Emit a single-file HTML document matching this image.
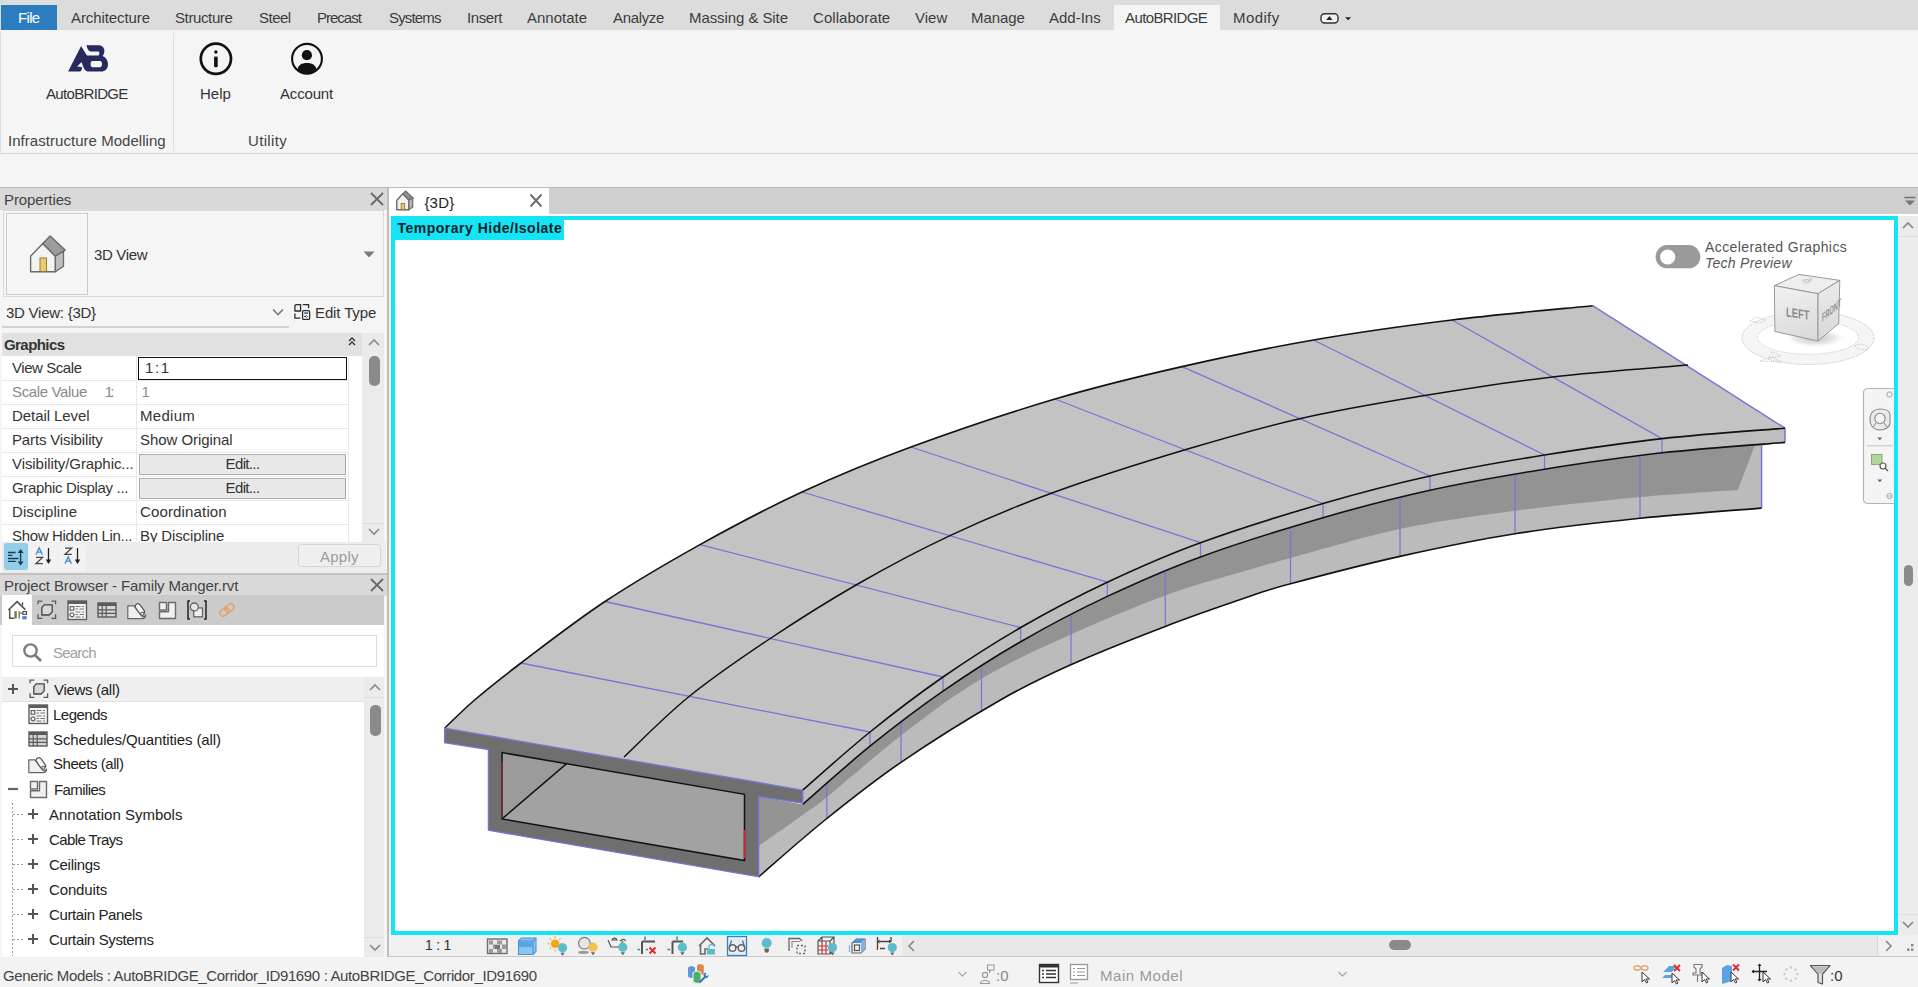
<!DOCTYPE html>
<html><head><meta charset="utf-8"><title>Revit</title>
<style>
html,body{margin:0;padding:0;width:1918px;height:987px;overflow:hidden;background:#f5f5f5;}
body{position:relative;font-family:"Liberation Sans", sans-serif;}
.t{position:absolute;white-space:nowrap;}
.r{position:absolute;}
svg{position:absolute;overflow:visible;}
</style></head><body>
<div class="r" style="left:0px;top:0px;width:1918px;height:30px;background:#dcdcdc;"></div>
<div class="r" style="left:1px;top:5px;width:56px;height:25px;background:#2b7dc0;"></div>
<div class="t" style="left:18.0px;top:10.3px;font-size:15px;line-height:15px;color:#ffffff;letter-spacing:-0.67px;">File</div>
<div class="r" style="left:1114px;top:5px;width:106px;height:25px;background:#f5f5f5;"></div>
<div class="t" style="left:71.0px;top:10.3px;font-size:15px;line-height:15px;color:#3c3c3c;letter-spacing:-0.09px;">Architecture</div>
<div class="t" style="left:175.0px;top:10.3px;font-size:15px;line-height:15px;color:#3c3c3c;letter-spacing:-0.38px;">Structure</div>
<div class="t" style="left:259.0px;top:10.3px;font-size:15px;line-height:15px;color:#3c3c3c;letter-spacing:-0.50px;">Steel</div>
<div class="t" style="left:317.0px;top:10.3px;font-size:15px;line-height:15px;color:#3c3c3c;letter-spacing:-1.00px;">Precast</div>
<div class="t" style="left:389.0px;top:10.3px;font-size:15px;line-height:15px;color:#3c3c3c;letter-spacing:-0.83px;">Systems</div>
<div class="t" style="left:467.0px;top:10.3px;font-size:15px;line-height:15px;color:#3c3c3c;letter-spacing:-0.40px;">Insert</div>
<div class="t" style="left:527.0px;top:10.3px;font-size:15px;line-height:15px;color:#3c3c3c;">Annotate</div>
<div class="t" style="left:613.0px;top:10.3px;font-size:15px;line-height:15px;color:#3c3c3c;letter-spacing:-0.33px;">Analyze</div>
<div class="t" style="left:689.0px;top:10.3px;font-size:15px;line-height:15px;color:#3c3c3c;letter-spacing:-0.08px;">Massing &amp; Site</div>
<div class="t" style="left:813.0px;top:10.3px;font-size:15px;line-height:15px;color:#3c3c3c;letter-spacing:0.05px;">Collaborate</div>
<div class="t" style="left:915.0px;top:10.3px;font-size:15px;line-height:15px;color:#3c3c3c;">View</div>
<div class="t" style="left:971.0px;top:10.3px;font-size:15px;line-height:15px;color:#3c3c3c;letter-spacing:-0.08px;">Manage</div>
<div class="t" style="left:1049.0px;top:10.3px;font-size:15px;line-height:15px;color:#3c3c3c;">Add-Ins</div>
<div class="t" style="left:1125.0px;top:10.3px;font-size:15px;line-height:15px;color:#3c3c3c;letter-spacing:-0.61px;">AutoBRIDGE</div>
<div class="t" style="left:1233.0px;top:10.3px;font-size:15px;line-height:15px;color:#3c3c3c;letter-spacing:0.40px;">Modify</div>
<svg style="left:0;top:0" width="1400" height="30" viewBox="0 0 1400 30"><rect x="1321" y="13.8" width="17" height="9.2" rx="3.5" fill="#f0f2f5" stroke="#333" stroke-width="1.4"/><path d="M1326.2 19.9 L1329.4 16.1 L1332.5 19.9 Z" fill="#222"/><path d="M1345.1 17.25 H1351.1 L1348.1 20.3 Z" fill="#222"/></svg><div class="r" style="left:0px;top:30px;width:1918px;height:123px;background:#f5f5f5;"></div>
<div class="r" style="left:0px;top:153px;width:1918px;height:1px;background:#d3d3d3;"></div>
<div class="r" style="left:173px;top:33px;width:1px;height:118px;background:#dedede;"></div>
<div class="r" style="left:0px;top:32px;width:1px;height:121px;background:#dedede;"></div>
<div class="t" style="left:46.0px;top:86.3px;font-size:15px;line-height:15px;color:#333333;letter-spacing:-0.67px;">AutoBRIDGE</div>
<div class="t" style="left:200.0px;top:86.3px;font-size:15px;line-height:15px;color:#333333;">Help</div>
<div class="t" style="left:280.0px;top:86.3px;font-size:15px;line-height:15px;color:#333333;letter-spacing:-0.17px;">Account</div>
<div class="t" style="left:8.0px;top:133.3px;font-size:15px;line-height:15px;color:#444444;letter-spacing:0.04px;">Infrastructure Modelling</div>
<div class="t" style="left:248.0px;top:133.3px;font-size:15px;line-height:15px;color:#444444;letter-spacing:0.33px;">Utility</div>
<svg style="left:0px;top:0px" width="120" height="80" viewBox="0 0 120 80"><path fill="#262b5c" fill-rule="evenodd" d="M68.1 71.6 L81.1 46.1 L86.9 55.4 L98.3 55.4 C99.6 55.4 99.9 51.4 98.3 51.4 L90.6 51.4 C88.5 51.4 87.2 48.5 86.4 45.3 L98.5 45.3 C102.3 45.3 104.4 47.8 104.4 50.8 C104.4 53 103.6 54.8 102.6 56.1 C106 57.6 108 60.4 108 64.2 C108 68.6 105.2 71.6 101 71.6 L88.6 71.6 C85.5 71.6 84.2 69 83.1 66.6 L81.5 62 L77.2 66.4 L81.4 67 C82.6 67.3 82.1 71.6 79.2 71.6 Z M92.3 61.1 L100.3 61.1 C102.6 61.1 102.6 67.2 100.3 67.2 L92.3 67.2 C90 67.2 90 61.1 92.3 61.1 Z"/></svg><svg style="left:0px;top:0px" width="340" height="80" viewBox="0 0 340 80"><circle cx="215.9" cy="58.8" r="15.1" fill="none" stroke="#111" stroke-width="2.7"/><circle cx="215.9" cy="52" r="1.7" fill="#111"/><rect x="214.1" y="56.6" width="3.6" height="10.6" rx="1.2" fill="#111"/></svg><svg style="left:0px;top:0px" width="340" height="80" viewBox="0 0 340 80"><circle cx="307" cy="58.8" r="14.9" fill="none" stroke="#111" stroke-width="2.1"/><circle cx="306.9" cy="55.2" r="5.1" fill="#111"/><path d="M297.3 69.5 C298.5 65 301.5 63 306.9 63 C312.3 63 315.3 65 316.7 69.5 C314 72.5 310.6 73.8 306.9 73.8 C303.2 73.8 299.8 72.5 297.3 69.5 Z" fill="#111"/></svg><div class="r" style="left:0px;top:187px;width:1918px;height:1px;background:#bcbcbc;"></div>
<div class="r" style="left:0px;top:188px;width:1918px;height:799px;background:#f0f0f0;"></div>
<div class="r" style="left:0px;top:188px;width:387px;height:387px;background:#f5f5f5;"></div>
<div class="r" style="left:0px;top:188px;width:387px;height:22px;background:#d9d9d9;"></div>
<div class="t" style="left:4.0px;top:192.3px;font-size:15px;line-height:15px;color:#444444;letter-spacing:-0.11px;">Properties</div>
<svg style="left:370px;top:192px" width="14" height="14" viewBox="0 0 14 14"><path d="M1 1L13 13M13 1L1 13" stroke="#6a6a6a" stroke-width="1.8"/></svg><div class="r" style="left:3px;top:210px;width:381px;height:87px;border:1px solid #dadada;box-sizing:border-box;"></div>
<div class="r" style="left:6px;top:213px;width:82px;height:82px;background:#f5f5f5;border:1px solid #cdcdcd;box-sizing:border-box;"></div>
<svg style="left:0px;top:0px" width="100" height="300" viewBox="0 0 100 300"><path d="M30.6 256.2 L42.8 243.4 L55.4 256.2 L55.4 271.8 L30.6 271.8 Z" fill="#f3f3f3" stroke="#6a6a6a" stroke-width="1.4" stroke-linejoin="round"/><path d="M42.8 243.4 L50.1 236.1 L65.1 250.1 L55.4 256.2 Z" fill="#9c9c9c" stroke="#6a6a6a" stroke-width="1.4" stroke-linejoin="round"/><path d="M55.4 256.2 L63.5 251.2 L63.5 266.2 L55.4 271.8 Z" fill="#bdbdbd" stroke="#6a6a6a" stroke-width="1.3" stroke-linejoin="round"/><rect x="40" y="258" width="6.4" height="13.6" fill="#e8cf6a" stroke="#8a6d2a" stroke-width="0.9"/></svg><div class="t" style="left:94.0px;top:247.3px;font-size:15px;line-height:15px;color:#333333;letter-spacing:-0.33px;">3D View</div>
<svg style="left:363px;top:251px" width="12" height="7" viewBox="0 0 12 7"><path d="M0.5 0.5H11.5L6 6.5Z" fill="#7a7a7a"/></svg><div class="t" style="left:6.0px;top:305.3px;font-size:15px;line-height:15px;color:#333333;letter-spacing:-0.25px;">3D View: {3D}</div>
<svg style="left:272px;top:308px" width="12" height="8" viewBox="0 0 12 8"><path d="M1 1.5L6 6.5L11 1.5" fill="none" stroke="#7a7a7a" stroke-width="1.6"/></svg><div class="r" style="left:2px;top:326px;width:287px;height:2px;background:#d3d3d3;"></div>
<svg style="left:0px;top:280px" width="330" height="50" viewBox="0 0 330 50"><g transform="translate(0 -280)" fill="none" stroke="#2a2a2a" stroke-width="1.3" stroke-linejoin="round"><path d="M296 304.6 H300.6 V311 H294.9 V305.8 Z" fill="#f0f0f0"/><path d="M302.8 304.6 H308.6 V308.3"/><path d="M294.9 313.5 V318.2 H300.3"/><rect x="302.6" y="310.6" width="7" height="8.8" rx="1.2" fill="#fff"/></g><g transform="translate(0 -280)"><rect x="304.2" y="312.3" width="3.9" height="1.6" fill="#2a5fa8"/><path d="M304.2 316.4 H305.6" stroke="#2a2a2a" stroke-width="1.1"/><path d="M306.5 315.3 L307.6 316.4 L306.5 317.5 L305.4 316.4 Z" fill="none" stroke="#2a2a2a" stroke-width="0.8"/></g></svg><div class="t" style="left:315.0px;top:305.3px;font-size:15px;line-height:15px;color:#333333;letter-spacing:-0.12px;">Edit Type</div>
<div class="r" style="left:2px;top:333px;width:360px;height:23px;background:#e1e1e1;"></div>
<div class="r" style="left:362px;top:333px;width:22px;height:23px;background:#eaeaea;"></div>
<div class="t" style="left:4.0px;top:337.3px;font-size:15px;line-height:15px;color:#333333;letter-spacing:-0.57px;font-weight:bold;">Graphics</div>
<div class="r" style="left:2px;top:356px;width:360px;height:186px;background:#ffffff;"></div>
<div class="r" style="left:138px;top:357px;width:209px;height:23px;background:#ffffff;border:1.6px solid #111;box-sizing:border-box;"></div>
<div class="r" style="left:2px;top:380px;width:346px;height:1px;background:#e9e9e9;"></div>
<div class="r" style="left:2px;top:404px;width:346px;height:1px;background:#e9e9e9;"></div>
<div class="r" style="left:2px;top:428px;width:346px;height:1px;background:#e9e9e9;"></div>
<div class="r" style="left:2px;top:452px;width:346px;height:1px;background:#e9e9e9;"></div>
<div class="r" style="left:2px;top:476px;width:346px;height:1px;background:#e9e9e9;"></div>
<div class="r" style="left:2px;top:500px;width:346px;height:1px;background:#e9e9e9;"></div>
<div class="r" style="left:2px;top:524px;width:346px;height:1px;background:#e9e9e9;"></div>
<div class="r" style="left:136px;top:356px;width:1px;height:186px;background:#e9e9e9;"></div>
<div class="r" style="left:348px;top:356px;width:1px;height:186px;background:#e9e9e9;"></div>
<div class="r" style="left:138px;top:357px;width:209px;height:23px;background:#ffffff;border:1.6px solid #111;box-sizing:border-box;"></div>
<div class="r" style="left:139px;top:454px;width:207px;height:21px;background:#e8e8e8;border:1px solid #adadad;box-sizing:border-box;"></div>
<div class="r" style="left:139px;top:478px;width:207px;height:21px;background:#e8e8e8;border:1px solid #adadad;box-sizing:border-box;"></div>
<div class="t" style="left:12.0px;top:360.3px;font-size:15px;line-height:15px;color:#333333;letter-spacing:-0.44px;">View Scale</div>
<div class="t" style="left:145.0px;top:360.3px;font-size:15px;line-height:15px;color:#333333;letter-spacing:-1.25px;">1 : 1</div>
<div class="t" style="left:12.0px;top:384.3px;font-size:15px;line-height:15px;color:#8a8a8a;letter-spacing:-0.36px;">Scale Value</div>
<div class="t" style="left:104.8px;top:384.3px;font-size:15px;line-height:15px;color:#8a8a8a;letter-spacing:-3.00px;">1:</div>
<div class="t" style="left:141.6px;top:384.3px;font-size:15px;line-height:15px;color:#8a8a8a;">1</div>
<div class="t" style="left:12.0px;top:408.3px;font-size:15px;line-height:15px;color:#333333;letter-spacing:-0.07px;">Detail Level</div>
<div class="t" style="left:140.0px;top:408.3px;font-size:15px;line-height:15px;color:#333333;letter-spacing:0.28px;">Medium</div>
<div class="t" style="left:12.0px;top:432.3px;font-size:15px;line-height:15px;color:#333333;letter-spacing:-0.15px;">Parts Visibility</div>
<div class="t" style="left:140.0px;top:432.3px;font-size:15px;line-height:15px;color:#333333;letter-spacing:-0.06px;">Show Original</div>
<div class="t" style="left:12.0px;top:456.3px;font-size:15px;line-height:15px;color:#333333;letter-spacing:-0.07px;">Visibility/Graphic...</div>
<div class="t" style="left:12.0px;top:480.3px;font-size:15px;line-height:15px;color:#333333;letter-spacing:-0.34px;">Graphic Display ...</div>
<div class="t" style="left:12.0px;top:504.3px;font-size:15px;line-height:15px;color:#333333;letter-spacing:0.10px;">Discipline</div>
<div class="t" style="left:140.0px;top:504.3px;font-size:15px;line-height:15px;color:#333333;letter-spacing:0.15px;">Coordination</div>
<div class="t" style="left:12.0px;top:528.3px;font-size:15px;line-height:15px;color:#333333;letter-spacing:-0.32px;">Show Hidden Lin...</div>
<div class="t" style="left:140.0px;top:528.3px;font-size:15px;line-height:15px;color:#333333;letter-spacing:-0.12px;">By Discipline</div>
<div class="t" style="left:225.6px;top:456.3px;font-size:15px;line-height:15px;color:#333333;letter-spacing:-0.65px;">Edit...</div>
<div class="t" style="left:225.6px;top:480.3px;font-size:15px;line-height:15px;color:#333333;letter-spacing:-0.65px;">Edit...</div>
<div class="r" style="left:362px;top:356px;width:22px;height:186px;background:#ebebeb;"></div>
<svg style="left:367px;top:337px" width="14" height="10" viewBox="0 0 14 10"><path d="M2 8L7 3L12 8" fill="none" stroke="#8a8a8a" stroke-width="1.6"/></svg><svg style="left:347px;top:336px" width="10" height="10" viewBox="0 0 10 10"><path d="M2 5L5 2L8 5M2 9L5 6L8 9" fill="none" stroke="#333" stroke-width="1.3"/></svg><div class="r" style="left:369px;top:356px;width:11px;height:30px;background:#8a8a8a;border-radius:5px;"></div>
<div class="r" style="left:363px;top:523px;width:20px;height:1px;background:#dcdcdc;"></div>
<svg style="left:367px;top:527px" width="14" height="10" viewBox="0 0 14 10"><path d="M2 2L7 7L12 2" fill="none" stroke="#8a8a8a" stroke-width="1.6"/></svg><div class="r" style="left:2px;top:542px;width:384px;height:31px;background:#ececec;"></div>
<div class="r" style="left:29px;top:543px;width:28px;height:28px;background:#f2f2f2;"></div>
<div class="r" style="left:58px;top:543px;width:28px;height:28px;background:#f2f2f2;"></div>
<div class="r" style="left:4px;top:543px;width:24px;height:27px;background:#92cdec;border-radius:3px;"></div>
<svg style="left:0px;top:0px" width="90" height="575" viewBox="0 0 90 575"><path d="M8 552.5H15.6 M8 555.4H12.5 M8 558.5H18.5 M8 561.4H15.6" stroke="#1e3a4c" stroke-width="1.3"/><path d="M20.6 551 V563" stroke="#1e3a4c" stroke-width="1.4"/><path d="M17.6 553 L20.6 549 L23.6 553 Z M17.6 561.5 L20.6 565.5 L23.6 561.5 Z" fill="#1e3a4c"/><path d="M36 554.6 L39.2 547.8 L42.4 554.6 M37.2 552.2 H41.2" fill="none" stroke="#3c8fd6" stroke-width="1.3"/><path d="M36 557.4 H42.6 L36 563.6 H42.8" fill="none" stroke="#444" stroke-width="1.3"/><path d="M48.5 548 V563" stroke="#222" stroke-width="1.3"/><path d="M45.8 559.5 L48.5 564 L51.2 559.5 Z" fill="#222"/><path d="M65 548.2 H71.6 L65 554.4 H71.8" fill="none" stroke="#444" stroke-width="1.3"/><path d="M65 563.6 L68.2 556.8 L71.4 563.6 M66.2 561.2 H70.2" fill="none" stroke="#3c8fd6" stroke-width="1.3"/><path d="M77.5 548 V563" stroke="#222" stroke-width="1.3"/><path d="M74.8 559.5 L77.5 564 L80.2 559.5 Z" fill="#222"/></svg><div class="r" style="left:298px;top:544px;width:83px;height:23px;background:#efefef;border:1px solid #d6d6d6;box-sizing:border-box;border-radius:3px;"></div>
<div class="t" style="left:320.0px;top:549.3px;font-size:15px;line-height:15px;color:#9a9a9a;letter-spacing:0.25px;">Apply</div>
<div class="r" style="left:0px;top:573px;width:387px;height:2px;background:#c2c2c2;"></div>
<div class="r" style="left:0px;top:575px;width:387px;height:382px;background:#f5f5f5;"></div>
<div class="r" style="left:0px;top:575px;width:387px;height:21px;background:#d9d9d9;"></div>
<div class="t" style="left:4.0px;top:578.3px;font-size:15px;line-height:15px;color:#444444;letter-spacing:-0.12px;">Project Browser - Family Manger.rvt</div>
<svg style="left:370px;top:578px" width="14" height="14" viewBox="0 0 14 14"><path d="M1 1L13 13M13 1L1 13" stroke="#6a6a6a" stroke-width="1.8"/></svg><div class="r" style="left:0px;top:595px;width:384px;height:30px;background:#cbcbcb;"></div>
<div class="r" style="left:2px;top:595px;width:30px;height:30px;background:#ffffff;"></div>
<svg style="left:0px;top:590px" width="40" height="40" viewBox="0 0 40 40"><g transform="translate(0 -590)"><path d="M8.4 610 L17.1 601.6 L25.3 609.6" fill="none" stroke="#505050" stroke-width="1.5" stroke-linejoin="miter"/><path d="M22.5 602.4 V605.6" stroke="#505050" stroke-width="1.4"/><path d="M9.7 609.3 V618.3 H14.4" fill="none" stroke="#555" stroke-width="1.5"/><rect x="14.4" y="611.2" width="2.4" height="7.3" fill="#7c7650"/><rect x="18.5" y="611.2" width="1.4" height="7.3" fill="#7c7650"/><path d="M19.9 613.1 H22.6" stroke="#666" stroke-width="1.1"/><rect x="22.9" y="611.5" width="3.6" height="2.8" fill="#fff" stroke="#444" stroke-width="1.1"/><rect x="22.3" y="616.1" width="4.4" height="3.3" fill="#4a8cc9"/></g></svg><svg style="left:36.5px;top:599.5px" width="20" height="20" viewBox="0 0 20 20"><path d="M1.1 4.3 V1.2 H5.3 M14.5 1.2 H18.6 V4.3 M18.6 14.3 V18.4 H14.5 M5.3 18.4 H1.1 V14.3" fill="none" stroke="#5a5a5a" stroke-width="1.3"/><path d="M4.8 7.7 L7.2 4.8 H15.2 V11.9 L12.1 15 H4.8 Z" fill="#d8d8d8" stroke="#444" stroke-width="1.3" stroke-linejoin="round"/></svg><svg style="left:66.5px;top:599.5px" width="20" height="20" viewBox="0 0 20 20"><rect x="1" y="1" width="18.5" height="18.5" fill="#f5f5f5" stroke="#5e5e5e" stroke-width="1.4"/><rect x="1" y="1" width="18.5" height="3" fill="#5e5e5e"/><rect x="3.2" y="6.6" width="3.6" height="3.6" fill="#fff" stroke="#666" stroke-width="1.2"/><circle cx="5" cy="14.8" r="2" fill="#fff" stroke="#666" stroke-width="1.2"/><path d="M8.5 6.5H13.5 M15 6.5H17 M8.5 9H11 M12.5 9H17 M8.5 12H13.5 M15 12H17 M8.5 14.5H11 M12.5 14.5H17 M8.5 17H13.5 M15 17H17" stroke="#777" stroke-width="1.1"/></svg><svg style="left:96.5px;top:599.5px" width="20" height="20" viewBox="0 0 20 20"><rect x="1" y="3" width="18" height="14" fill="#d5d5d5" stroke="#5a5a5a" stroke-width="1.4"/><rect x="1" y="3" width="18" height="3" fill="#5a5a5a"/><path d="M1 9.8H19 M1 13.4H19 M5.2 6V17 M9.2 6V17" stroke="#5a5a5a" stroke-width="1.2"/></svg><svg style="left:126.5px;top:600.5px" width="21" height="20" viewBox="0 0 21 20"><path d="M0.8 4.9 H7 L14.5 15 C15.5 16.5 17.5 16 18.6 14 C18.8 16.2 17.5 17.6 15.3 17.6 H0.8 Z" fill="#f0f0f0" stroke="#666" stroke-width="1.2" stroke-linejoin="round"/><g transform="rotate(54.4 12.85 8.15)"><rect x="6.75" y="5.45" width="12.2" height="5.4" rx="2.7" fill="#f4f4f4" stroke="#555" stroke-width="1.2"/></g><circle cx="15.3" cy="12.8" r="1.6" fill="#fff" stroke="#555" stroke-width="1.1"/></svg><svg style="left:157.5px;top:600.5px" width="20" height="20" viewBox="0 0 20 20"><rect x="1.5" y="1.5" width="7" height="7.5" fill="#f0f0f0" stroke="#6a6a6a" stroke-width="1.4"/><path d="M10.5 1.5 H17.5 V17.5 H1.5 V10.8 H10.5 Z" fill="#f0f0f0" stroke="#6a6a6a" stroke-width="1.4" stroke-linejoin="round"/></svg><svg style="left:186.5px;top:599.5px" width="20" height="20" viewBox="0 0 20 20"><path d="M3 1 H1 V19 H3 M17 1 H19 V19 H17" fill="none" stroke="#222" stroke-width="1.5"/><rect x="6.7" y="8" width="8.8" height="8.8" fill="#efefef" stroke="#666" stroke-width="1.3"/><circle cx="7.3" cy="7" r="4" fill="#e6e6e6" stroke="#666" stroke-width="1.3"/></svg><svg style="left:217px;top:602px" width="20" height="16" viewBox="0 0 20 16"><g transform="rotate(-38 10 8)" fill="none" stroke="#e8a06a" stroke-width="1.5"><rect x="2" y="4.8" width="9.5" height="6.4" rx="3.2"/><rect x="8.5" y="4.8" width="9.5" height="6.4" rx="3.2"/></g></svg><div class="r" style="left:2px;top:625px;width:382px;height:52px;background:#ffffff;"></div>
<div class="r" style="left:12px;top:635px;width:365px;height:32px;background:#ffffff;border:1px solid #dcdcdc;box-sizing:border-box;"></div>
<svg style="left:22px;top:642px" width="22" height="22" viewBox="0 0 22 22"><circle cx="8.5" cy="8.5" r="6.2" fill="none" stroke="#7a7a7a" stroke-width="2.3"/><path d="M13 13L19 19" stroke="#7a7a7a" stroke-width="2.6"/></svg><div class="t" style="left:53.0px;top:645.3px;font-size:15px;line-height:15px;color:#a0a0a0;letter-spacing:-0.80px;">Search</div>
<div class="r" style="left:2px;top:677px;width:362px;height:280px;background:#ffffff;"></div>
<div class="r" style="left:2px;top:677px;width:362px;height:24px;background:#efefef;"></div>
<div class="r" style="left:2px;top:701px;width:362px;height:1px;background:#e3e3e3;"></div>
<svg style="left:6.9px;top:683.3px" width="12" height="12" viewBox="0 0 12 12"><path d="M1 6H11 M6 1V11" stroke="#555" stroke-width="2"/></svg><svg style="left:28.5px;top:678.5px" width="20" height="20" viewBox="0 0 20 20"><path d="M1.1 4.3 V1.2 H5.3 M14.5 1.2 H18.6 V4.3 M18.6 14.3 V18.4 H14.5 M5.3 18.4 H1.1 V14.3" fill="none" stroke="#5a5a5a" stroke-width="1.3"/><path d="M4.8 7.7 L7.2 4.8 H15.2 V11.9 L12.1 15 H4.8 Z" fill="#d8d8d8" stroke="#444" stroke-width="1.3" stroke-linejoin="round"/></svg><div class="t" style="left:54.0px;top:682.3px;font-size:15px;line-height:15px;color:#222222;letter-spacing:-0.30px;">Views (all)</div>
<svg style="left:28px;top:704px" width="20" height="20" viewBox="0 0 20 20"><rect x="1" y="1" width="18.5" height="18.5" fill="#f5f5f5" stroke="#5e5e5e" stroke-width="1.4"/><rect x="1" y="1" width="18.5" height="3" fill="#5e5e5e"/><rect x="3.2" y="6.6" width="3.6" height="3.6" fill="#fff" stroke="#666" stroke-width="1.2"/><circle cx="5" cy="14.8" r="2" fill="#fff" stroke="#666" stroke-width="1.2"/><path d="M8.5 6.5H13.5 M15 6.5H17 M8.5 9H11 M12.5 9H17 M8.5 12H13.5 M15 12H17 M8.5 14.5H11 M12.5 14.5H17 M8.5 17H13.5 M15 17H17" stroke="#777" stroke-width="1.1"/></svg><div class="t" style="left:53.0px;top:706.6px;font-size:15px;line-height:15px;color:#222222;letter-spacing:-0.50px;">Legends</div>
<svg style="left:28px;top:728.5px" width="20" height="20" viewBox="0 0 20 20"><rect x="1" y="3" width="18" height="14" fill="#d5d5d5" stroke="#5a5a5a" stroke-width="1.4"/><rect x="1" y="3" width="18" height="3" fill="#5a5a5a"/><path d="M1 9.8H19 M1 13.4H19 M5.2 6V17 M9.2 6V17" stroke="#5a5a5a" stroke-width="1.2"/></svg><div class="t" style="left:53.0px;top:732.2px;font-size:15px;line-height:15px;color:#222222;letter-spacing:-0.12px;">Schedules/Quantities (all)</div>
<svg style="left:28px;top:754.5px" width="21" height="20" viewBox="0 0 21 20"><path d="M0.8 4.9 H7 L14.5 15 C15.5 16.5 17.5 16 18.6 14 C18.8 16.2 17.5 17.6 15.3 17.6 H0.8 Z" fill="#f0f0f0" stroke="#666" stroke-width="1.2" stroke-linejoin="round"/><g transform="rotate(54.4 12.85 8.15)"><rect x="6.75" y="5.45" width="12.2" height="5.4" rx="2.7" fill="#f4f4f4" stroke="#555" stroke-width="1.2"/></g><circle cx="15.3" cy="12.8" r="1.6" fill="#fff" stroke="#555" stroke-width="1.1"/></svg><div class="t" style="left:53.0px;top:756.3px;font-size:15px;line-height:15px;color:#222222;letter-spacing:-0.45px;">Sheets (all)</div>
<svg style="left:6.9px;top:782.5px" width="12" height="12" viewBox="0 0 12 12"><path d="M1 6H11" stroke="#666" stroke-width="2.2"/></svg><svg style="left:29px;top:779.5px" width="20" height="20" viewBox="0 0 20 20"><rect x="1.5" y="1.5" width="7" height="7.5" fill="#f0f0f0" stroke="#6a6a6a" stroke-width="1.4"/><path d="M10.5 1.5 H17.5 V17.5 H1.5 V10.8 H10.5 Z" fill="#f0f0f0" stroke="#6a6a6a" stroke-width="1.4" stroke-linejoin="round"/></svg><div class="t" style="left:54.0px;top:782.1px;font-size:15px;line-height:15px;color:#222222;letter-spacing:-0.57px;">Families</div>
<svg style="left:0;top:0" width="40" height="960" viewBox="0 0 40 960"><path d="M12.5 803 V956" stroke="#9a9a9a" stroke-width="1" stroke-dasharray="2 2"/><path d="M13 814.5 H23" stroke="#9a9a9a" stroke-width="1" stroke-dasharray="2 2"/><path d="M13 839.5 H23" stroke="#9a9a9a" stroke-width="1" stroke-dasharray="2 2"/><path d="M13 864.5 H23" stroke="#9a9a9a" stroke-width="1" stroke-dasharray="2 2"/><path d="M13 889.5 H23" stroke="#9a9a9a" stroke-width="1" stroke-dasharray="2 2"/><path d="M13 914.5 H23" stroke="#9a9a9a" stroke-width="1" stroke-dasharray="2 2"/><path d="M13 939.5 H23" stroke="#9a9a9a" stroke-width="1" stroke-dasharray="2 2"/></svg><svg style="left:27.1px;top:808px" width="12" height="12" viewBox="0 0 12 12"><path d="M1 6H11 M6 1V11" stroke="#555" stroke-width="2"/></svg><div class="t" style="left:49.0px;top:807.3px;font-size:15px;line-height:15px;color:#222222;">Annotation Symbols</div>
<svg style="left:27.1px;top:833px" width="12" height="12" viewBox="0 0 12 12"><path d="M1 6H11 M6 1V11" stroke="#555" stroke-width="2"/></svg><div class="t" style="left:49.0px;top:832.3px;font-size:15px;line-height:15px;color:#222222;letter-spacing:-0.60px;">Cable Trays</div>
<svg style="left:27.1px;top:858px" width="12" height="12" viewBox="0 0 12 12"><path d="M1 6H11 M6 1V11" stroke="#555" stroke-width="2"/></svg><div class="t" style="left:49.0px;top:857.3px;font-size:15px;line-height:15px;color:#222222;letter-spacing:-0.29px;">Ceilings</div>
<svg style="left:27.1px;top:883px" width="12" height="12" viewBox="0 0 12 12"><path d="M1 6H11 M6 1V11" stroke="#555" stroke-width="2"/></svg><div class="t" style="left:49.0px;top:882.3px;font-size:15px;line-height:15px;color:#222222;letter-spacing:-0.14px;">Conduits</div>
<svg style="left:27.1px;top:908px" width="12" height="12" viewBox="0 0 12 12"><path d="M1 6H11 M6 1V11" stroke="#555" stroke-width="2"/></svg><div class="t" style="left:49.0px;top:907.3px;font-size:15px;line-height:15px;color:#222222;letter-spacing:-0.38px;">Curtain Panels</div>
<svg style="left:27.1px;top:933px" width="12" height="12" viewBox="0 0 12 12"><path d="M1 6H11 M6 1V11" stroke="#555" stroke-width="2"/></svg><div class="t" style="left:49.0px;top:932.3px;font-size:15px;line-height:15px;color:#222222;letter-spacing:-0.36px;">Curtain Systems</div>
<div class="r" style="left:364px;top:677px;width:20px;height:280px;background:#ebebeb;"></div>
<svg style="left:368px;top:682px" width="14" height="10" viewBox="0 0 14 10"><path d="M2 8L7 3L12 8" fill="none" stroke="#8a8a8a" stroke-width="1.6"/></svg><div class="r" style="left:364px;top:697px;width:20px;height:1px;background:#dcdcdc;"></div>
<div class="r" style="left:370px;top:705px;width:11px;height:31px;background:#8a8a8a;border-radius:5px;"></div>
<div class="r" style="left:364px;top:937px;width:20px;height:1px;background:#dcdcdc;"></div>
<svg style="left:368px;top:943px" width="14" height="10" viewBox="0 0 14 10"><path d="M2 2L7 7L12 2" fill="none" stroke="#8a8a8a" stroke-width="1.6"/></svg><div class="r" style="left:387px;top:188px;width:4px;height:770px;background:#f2f2f2;"></div>
<div class="r" style="left:387px;top:188px;width:2px;height:770px;background:#bdbdbd;"></div>
<div class="r" style="left:389px;top:188px;width:1529px;height:26px;background:#cfcfcf;"></div>
<div class="r" style="left:389px;top:188px;width:160px;height:28px;background:#ffffff;"></div>
<svg style="left:393.5px;top:189.5px" width="22" height="22" viewBox="0 0 20 20"><path d="M2.5 9.5 L8 3.5 L13.5 9 L13.5 18 L2.5 18 Z" fill="#f2f2f2" stroke="#6d6d6d" stroke-width="1.3" stroke-linejoin="round"/><path d="M8 3.5 L10.5 1 L17.5 7.5 L13.5 9 Z" fill="#8f8f8f" stroke="#6d6d6d" stroke-width="1.2" stroke-linejoin="round"/><path d="M13.5 9 L17 7.5 L17 15.5 L13.5 18 Z" fill="#b5b5b5" stroke="#6d6d6d" stroke-width="1.1"/><rect x="6.5" y="12.2" width="3.2" height="5.8" fill="#e5cd6a" stroke="#8a6d2a" stroke-width="0.7"/></svg><div class="t" style="left:424.4px;top:194.5px;font-size:15px;line-height:15px;color:#1e1e1e;letter-spacing:0.20px;">{3D}</div>
<svg style="left:529px;top:193px" width="14" height="15" viewBox="0 0 14 15"><path d="M1.5 1.5L12.5 13.5M12.5 1.5L1.5 13.5" stroke="#6e6e6e" stroke-width="2"/></svg><div class="r" style="left:389px;top:214px;width:1529px;height:2px;background:#ffffff;"></div>
<svg style="left:1903px;top:195px" width="14" height="14" viewBox="0 0 14 14"><path d="M1.5 2.5H12.5" stroke="#777" stroke-width="1.6"/><path d="M2 5.5H12L7 10.5Z" fill="#777"/></svg><div class="r" style="left:391px;top:216px;width:1507px;height:719px;background:#ffffff;"></div>
<svg style="left:0;top:0" width="1918" height="987" viewBox="0 0 1918 987"><path d="M758.7 876.8 C769.8 867.3 801.2 839.2 825.0 820.0 C848.8 800.8 872.5 781.8 901.7 761.8 C930.9 741.8 972.0 716.3 1000.0 700.2 C1028.0 684.1 1042.2 677.5 1069.7 665.2 C1097.2 652.9 1135.2 637.9 1165.3 626.4 C1195.3 614.9 1229.1 603.4 1250.0 596.3 C1270.9 589.2 1265.5 590.4 1290.5 583.8 C1315.5 577.1 1362.6 564.7 1400.0 556.4 C1437.4 548.1 1475.0 540.1 1515.0 533.8 C1555.0 527.4 1598.9 522.6 1640.0 518.3 C1681.1 514.0 1741.3 509.8 1761.6 508.1 L1761.6 445.8 L1785.0 442.4 C1764.5 444.1 1702.1 448.3 1662.0 452.8 C1621.9 457.3 1583.2 463.0 1544.5 469.2 C1505.8 475.4 1466.9 482.1 1430.0 490.2 C1393.1 498.3 1361.2 506.6 1323.0 517.7 C1284.8 528.8 1236.5 543.8 1200.5 556.9 C1164.5 570.0 1137.3 582.3 1107.3 596.4 C1077.3 610.5 1048.1 625.9 1020.7 641.7 C993.3 657.5 968.1 673.8 943.0 691.2 C917.9 708.6 893.4 727.3 870.0 746.2 C846.6 765.1 813.8 794.7 802.6 804.4 L758.7 796.6 Z" fill="#bbbbbb"/><path d="M758.7 846.0 C766.2 840.7 792.6 822.2 804.0 814.0 C815.4 805.8 810.7 810.2 827.0 797.0 C843.3 783.8 876.0 754.7 901.7 735.0 C927.4 715.3 953.0 695.7 981.0 679.0 C1009.0 662.3 1039.0 648.9 1069.7 635.0 C1100.4 621.1 1135.2 606.3 1165.3 595.4 C1195.3 584.5 1229.1 575.8 1250.0 569.6 C1270.9 563.4 1265.5 564.8 1290.5 558.0 C1315.5 551.2 1362.6 536.9 1400.0 529.0 C1437.4 521.1 1475.0 516.1 1515.0 510.8 C1555.0 505.5 1602.9 500.5 1640.0 497.0 C1677.1 493.5 1721.5 491.1 1737.8 489.9 L1754.5 446.3 L1785.0 442.4 C1764.5 444.1 1702.1 448.3 1662.0 452.8 C1621.9 457.3 1583.2 463.0 1544.5 469.2 C1505.8 475.4 1466.9 482.1 1430.0 490.2 C1393.1 498.3 1361.2 506.6 1323.0 517.7 C1284.8 528.8 1236.5 543.8 1200.5 556.9 C1164.5 570.0 1137.3 582.3 1107.3 596.4 C1077.3 610.5 1048.1 625.9 1020.7 641.7 C993.3 657.5 968.1 673.8 943.0 691.2 C917.9 708.6 893.4 727.3 870.0 746.2 C846.6 765.1 813.8 794.7 802.6 804.4 L758.7 796.6 Z" fill="#939393"/><path d="M826.8 783.5 L826.8 818.6" stroke="#7676d6" stroke-width="1.2"/><path d="M901 722.8 L901 762.3" stroke="#7676d6" stroke-width="1.2"/><path d="M981.5 666.7 L981.5 711.8" stroke="#7676d6" stroke-width="1.2"/><path d="M1071 615.4 L1071 664.7" stroke="#7676d6" stroke-width="1.2"/><path d="M1165.3 571.8 L1165.3 626.4" stroke="#7676d6" stroke-width="1.2"/><path d="M1290.5 528.1 L1290.5 583.8" stroke="#7676d6" stroke-width="1.2"/><path d="M1400 497.9 L1400 556.4" stroke="#7676d6" stroke-width="1.2"/><path d="M1515 474.6 L1515 533.8" stroke="#7676d6" stroke-width="1.2"/><path d="M1640 455.9 L1640 518.3" stroke="#7676d6" stroke-width="1.2"/><path d="M1761.6 445.8 L1761.6 508.1" stroke="#7676d6" stroke-width="1.5"/><path d="M758.7 876.8 C769.8 867.3 801.2 839.2 825.0 820.0 C848.8 800.8 872.5 781.8 901.7 761.8 C930.9 741.8 972.0 716.3 1000.0 700.2 C1028.0 684.1 1042.2 677.5 1069.7 665.2 C1097.2 652.9 1135.2 637.9 1165.3 626.4 C1195.3 614.9 1229.1 603.4 1250.0 596.3 C1270.9 589.2 1265.5 590.4 1290.5 583.8 C1315.5 577.1 1362.6 564.7 1400.0 556.4 C1437.4 548.1 1475.0 540.1 1515.0 533.8 C1555.0 527.4 1598.9 522.6 1640.0 518.3 C1681.1 514.0 1741.3 509.8 1761.6 508.1" fill="none" stroke="#111" stroke-width="1.6"/><path d="M802.6 790.2 C813.8 780.5 846.6 750.9 870.0 732.0 C893.4 713.1 917.9 694.4 943.0 677.0 C968.1 659.6 993.3 643.3 1020.7 627.5 C1048.1 611.7 1077.3 596.3 1107.3 582.2 C1137.3 568.1 1164.5 555.8 1200.5 542.7 C1236.5 529.6 1284.8 514.6 1323.0 503.5 C1361.2 492.4 1393.1 484.1 1430.0 476.0 C1466.9 467.9 1505.8 461.2 1544.5 455.0 C1583.2 448.8 1621.9 443.1 1662.0 438.6 C1702.1 434.1 1764.5 429.9 1785.0 428.2 L1785 442.4 L1785.0 442.4 C1764.5 444.1 1702.1 448.3 1662.0 452.8 C1621.9 457.3 1583.2 463.0 1544.5 469.2 C1505.8 475.4 1466.9 482.1 1430.0 490.2 C1393.1 498.3 1361.2 506.6 1323.0 517.7 C1284.8 528.8 1236.5 543.8 1200.5 556.9 C1164.5 570.0 1137.3 582.3 1107.3 596.4 C1077.3 610.5 1048.1 625.9 1020.7 641.7 C993.3 657.5 968.1 673.8 943.0 691.2 C917.9 708.6 893.4 727.3 870.0 746.2 C846.6 765.1 813.8 794.7 802.6 804.4 Z" fill="#bdbdbd"/><path d="M870 732 L870 746.2" stroke="#7676d6" stroke-width="1.2"/><path d="M943 677 L943 691.2" stroke="#7676d6" stroke-width="1.2"/><path d="M1020.7 627.5 L1020.7 641.7" stroke="#7676d6" stroke-width="1.2"/><path d="M1107.3 582.2 L1107.3 596.4000000000001" stroke="#7676d6" stroke-width="1.2"/><path d="M1200.5 542.7 L1200.5 556.9000000000001" stroke="#7676d6" stroke-width="1.2"/><path d="M1323 503.5 L1323 517.7" stroke="#7676d6" stroke-width="1.2"/><path d="M1430 476 L1430 490.2" stroke="#7676d6" stroke-width="1.2"/><path d="M1544.5 455 L1544.5 469.2" stroke="#7676d6" stroke-width="1.2"/><path d="M1662 438.6 L1662 452.8" stroke="#7676d6" stroke-width="1.2"/><path d="M1785 428.2 L1785 442.4" stroke="#7676d6" stroke-width="1.5"/><path d="M802.6 804.4 C813.8 794.7 846.6 765.1 870.0 746.2 C893.4 727.3 917.9 708.6 943.0 691.2 C968.1 673.8 993.3 657.5 1020.7 641.7 C1048.1 625.9 1077.3 610.5 1107.3 596.4 C1137.3 582.3 1164.5 570.0 1200.5 556.9 C1236.5 543.8 1284.8 528.8 1323.0 517.7 C1361.2 506.6 1393.1 498.3 1430.0 490.2 C1466.9 482.1 1505.8 475.4 1544.5 469.2 C1583.2 463.0 1621.9 457.3 1662.0 452.8 C1702.1 448.3 1764.5 444.1 1785.0 442.4" fill="none" stroke="#111" stroke-width="1.6"/><path d="M444.6 728.2 C449.6 723.5 461.9 710.9 474.6 700.0 C487.3 689.1 499.3 679.4 521.0 663.0 C542.7 646.6 575.2 621.2 605.0 601.5 C634.8 581.8 667.2 562.9 700.0 544.6 C732.8 526.4 766.8 508.3 802.0 492.0 C837.2 475.7 868.8 462.5 911.0 447.0 C953.2 431.5 1009.8 412.4 1055.0 399.0 C1100.2 385.6 1138.9 376.4 1182.0 366.6 C1225.1 356.8 1268.5 347.8 1313.5 340.0 C1358.5 332.2 1405.5 325.7 1452.0 320.0 C1498.5 314.3 1569.2 308.1 1592.7 305.7 L1785 428.2 L1785.0 428.2 C1764.5 429.9 1702.1 434.1 1662.0 438.6 C1621.9 443.1 1583.2 448.8 1544.5 455.0 C1505.8 461.2 1466.9 467.9 1430.0 476.0 C1393.1 484.1 1361.2 492.4 1323.0 503.5 C1284.8 514.6 1236.5 529.6 1200.5 542.7 C1164.5 555.8 1137.3 568.1 1107.3 582.2 C1077.3 596.3 1048.1 611.7 1020.7 627.5 C993.3 643.3 968.1 659.6 943.0 677.0 C917.9 694.4 893.4 713.1 870.0 732.0 C846.6 750.9 813.8 780.5 802.6 790.2 Z" fill="#c3c3c3"/><path d="M521 663 L870 732" stroke="#7676d6" stroke-width="1.3"/><path d="M605 601.5 L943 677" stroke="#7676d6" stroke-width="1.3"/><path d="M700 544.6 L1020.7 627.5" stroke="#7676d6" stroke-width="1.3"/><path d="M802 492 L1107.3 582.2" stroke="#7676d6" stroke-width="1.3"/><path d="M911 447 L1200.5 542.7" stroke="#7676d6" stroke-width="1.3"/><path d="M1055 399 L1323 503.5" stroke="#7676d6" stroke-width="1.3"/><path d="M1182 366.6 L1430 476" stroke="#7676d6" stroke-width="1.3"/><path d="M1313.5 340 L1544.5 455" stroke="#7676d6" stroke-width="1.3"/><path d="M1452 320 L1662 438.6" stroke="#7676d6" stroke-width="1.3"/><path d="M1592.7 305.7 L1785 428.2" stroke="#7676d6" stroke-width="1.5"/><path d="M624.0 757.0 C634.8 747.0 664.0 716.8 688.5 697.0 C713.0 677.2 742.8 656.8 771.0 638.0 C799.2 619.2 828.0 601.1 857.8 584.0 C887.6 566.9 917.6 550.8 950.0 535.6 C982.4 520.4 1012.7 507.4 1052.0 493.0 C1091.3 478.6 1144.5 461.9 1186.0 449.5 C1227.5 437.1 1261.2 427.4 1300.7 418.5 C1340.2 409.6 1381.0 402.7 1423.0 395.8 C1465.0 388.9 1508.3 382.0 1552.5 376.9 C1596.7 371.8 1665.4 367.0 1688.0 365.0" fill="none" stroke="#111" stroke-width="1.5"/><path d="M444.6 728.2 C449.6 723.5 461.9 710.9 474.6 700.0 C487.3 689.1 499.3 679.4 521.0 663.0 C542.7 646.6 575.2 621.2 605.0 601.5 C634.8 581.8 667.2 562.9 700.0 544.6 C732.8 526.4 766.8 508.3 802.0 492.0 C837.2 475.7 868.8 462.5 911.0 447.0 C953.2 431.5 1009.8 412.4 1055.0 399.0 C1100.2 385.6 1138.9 376.4 1182.0 366.6 C1225.1 356.8 1268.5 347.8 1313.5 340.0 C1358.5 332.2 1405.5 325.7 1452.0 320.0 C1498.5 314.3 1569.2 308.1 1592.7 305.7" fill="none" stroke="#111" stroke-width="1.6"/><path d="M802.6 790.2 C813.8 780.5 846.6 750.9 870.0 732.0 C893.4 713.1 917.9 694.4 943.0 677.0 C968.1 659.6 993.3 643.3 1020.7 627.5 C1048.1 611.7 1077.3 596.3 1107.3 582.2 C1137.3 568.1 1164.5 555.8 1200.5 542.7 C1236.5 529.6 1284.8 514.6 1323.0 503.5 C1361.2 492.4 1393.1 484.1 1430.0 476.0 C1466.9 467.9 1505.8 461.2 1544.5 455.0 C1583.2 448.8 1621.9 443.1 1662.0 438.6 C1702.1 434.1 1764.5 429.9 1785.0 428.2" fill="none" stroke="#111" stroke-width="1.6"/><path d="M444.6 728.2 L802.6 790.2 L802.6 803.2 L758.7 796.6 L758.7 876.8 L488.4 830.3 L488.4 749.6 L444.6 742.8 Z M502 752.6 L744.5 794.3 L744.5 860.6 L502 818.9 Z" fill="#6f6f6f" fill-rule="evenodd" stroke="#7676d6" stroke-width="1.3"/><path d="M502 752.6 L744.5 794.3 L744.5 860.6 L502 818.9 Z" fill="#a2a2a2"/><path d="M502 752.6 L566.6 763.6 L502 818.9 Z" fill="#9b9b9b"/><path d="M502 818.9 L566.6 763.6" stroke="#111" stroke-width="1.4"/><path d="M502 752.6 L744.5 794.3 L744.5 860.6 L502 818.9 Z" fill="none" stroke="#111" stroke-width="1.5"/><path d="M744.5 830 L744.5 858" stroke="#e02020" stroke-width="1.5"/><path d="M502 762 L502 818" stroke="#c03030" stroke-width="0.8"/><path d="M802.6 790.2 L802.6 803.2" stroke="#7676d6" stroke-width="1.2"/></svg><svg style="left:0;top:0" width="1918" height="987" viewBox="0 0 1918 987"><rect x="1863.5" y="388.5" width="36" height="115" rx="4" fill="#f4f4f4" stroke="#b4b4b4" stroke-width="1.2"/><circle cx="1889.5" cy="394.5" r="2.6" fill="none" stroke="#999" stroke-width="0.9"/><path d="M1870 419 C1870 412 1875 409 1880 409 C1885 409 1890 410 1890 415 L1890 423 C1890 427 1885 430 1880 430 C1874 430 1870 426 1870 419 Z" fill="#eaeaea" stroke="#8a8a8a" stroke-width="1.1"/><circle cx="1880" cy="418.5" r="5.2" fill="#f4f4f4" stroke="#8a8a8a" stroke-width="1.1"/><path d="M1873 427 L1876 423 M1887 427 L1884 423" stroke="#8a8a8a" stroke-width="1"/><path d="M1877.3 437.5 H1882.3 L1879.8 440.3 Z" fill="#666"/><path d="M1867 445.8 H1893" stroke="#c4c4c4" stroke-width="1"/><rect x="1871.5" y="454.5" width="10.5" height="10" fill="#b4d4a0" stroke="#7da86a" stroke-width="0.9"/><circle cx="1883" cy="466" r="3" fill="#fff" stroke="#555" stroke-width="1.1"/><path d="M1885 468 L1888 471" stroke="#555" stroke-width="1.3"/><path d="M1877.3 479.5 H1882.3 L1879.8 482.3 Z" fill="#666"/><circle cx="1889.5" cy="496" r="2.6" fill="none" stroke="#999" stroke-width="0.9"/><path d="M1888 496 H1891" stroke="#999" stroke-width="0.9"/></svg><div class="r" style="left:391px;top:216px;width:1507px;height:4px;background:#14e4f4;"></div>
<div class="r" style="left:391px;top:931px;width:1507px;height:4px;background:#14e4f4;"></div>
<div class="r" style="left:391px;top:216px;width:4px;height:719px;background:#14e4f4;"></div>
<div class="r" style="left:1894px;top:216px;width:4px;height:719px;background:#14e4f4;"></div>
<div class="r" style="left:391px;top:216px;width:173px;height:24px;background:#14e4f4;"></div>
<div class="t" style="left:397.5px;top:220.9px;font-size:14px;line-height:14px;color:#04222c;letter-spacing:0.50px;font-weight:bold;">Temporary Hide/Isolate</div>
<div class="r" style="left:1898px;top:216px;width:20px;height:719px;background:#ebebeb;"></div>
<div class="r" style="left:1898px;top:236px;width:20px;height:1px;background:#dcdcdc;"></div>
<div class="r" style="left:1898px;top:914px;width:20px;height:1px;background:#dcdcdc;"></div>
<svg style="left:1901px;top:219px" width="14" height="12" viewBox="0 0 14 12"><path d="M2 9L7 4L12 9" fill="none" stroke="#8a8a8a" stroke-width="1.7"/></svg><svg style="left:1901px;top:919px" width="14" height="12" viewBox="0 0 14 12"><path d="M2 3L7 8L12 3" fill="none" stroke="#8a8a8a" stroke-width="1.7"/></svg><div class="r" style="left:1904px;top:565px;width:9px;height:21px;background:#8a8a8a;border-radius:5px;"></div>
<div class="r" style="left:391px;top:935px;width:1527px;height:21px;background:#f0f0f0;"></div>
<div class="r" style="left:902px;top:935px;width:975px;height:21px;background:#e8e8e8;"></div>
<div class="r" style="left:1877px;top:935px;width:1px;height:21px;background:#d8d8d8;"></div>
<div class="r" style="left:389px;top:956px;width:1529px;height:1px;background:#c9c9c9;"></div>
<div class="r" style="left:1389px;top:940px;width:22px;height:10px;background:#8a8a8a;border-radius:5px;"></div>
<svg style="left:1883px;top:939px" width="12" height="14" viewBox="0 0 12 14"><path d="M3 2L8 7L3 12" fill="none" stroke="#8a8a8a" stroke-width="1.7"/></svg><svg style="left:906px;top:939px" width="12" height="14" viewBox="0 0 12 14"><path d="M8 2L3 7L8 12" fill="none" stroke="#8a8a8a" stroke-width="1.7"/></svg><svg style="left:1904px;top:942px" width="12" height="12" viewBox="0 0 12 12"><rect x="7" y="2" width="2.4" height="2.4" fill="#888"/><rect x="3" y="6.5" width="2.4" height="2.4" fill="#888"/><rect x="7" y="6.5" width="2.4" height="2.4" fill="#888"/></svg><div class="t" style="left:425.0px;top:938.2px;font-size:14px;line-height:14px;color:#333333;letter-spacing:-0.25px;">1 : 1</div>
<svg style="left:0;top:0" width="1918" height="987" viewBox="0 0 1918 987"><rect x="487.5" y="939" width="19.5" height="14.5" fill="#e8e8e8" stroke="#6e6e6e" stroke-width="1.4"/><path d="M489 940.5h4v4h-4zM497 940.5h5v4h-5zM502 944.5h4v4.5h-4zM493 944.5h4v4.5h-4zM489 949h4v4h-4zM497 949h5v4h-5z" fill="#9a9a9a"/><rect x="495" y="945" width="5" height="4" fill="#777"/><path d="M518.5 941 L521.5 938 H536 V951.5 L533 954.5 H518.5 Z" fill="#8cc4f0" stroke="#4d94d6" stroke-width="1.1"/><path d="M518.5 941 H533 V954.5 M533 941 L536 938" fill="none" stroke="#4d94d6" stroke-width="1.1"/><rect x="519" y="941.5" width="13.5" height="5.5" fill="#5aa3e6"/><g stroke="#f5b24a" stroke-width="1.2"><path d="M560.6 943.7 L562.9 943.7"/><path d="M559.0 939.9 L560.6 938.2"/><path d="M555.1 938.2 L555.1 935.9"/><path d="M551.2 939.9 L549.6 938.2"/><path d="M549.6 943.7 L547.3 943.7"/><path d="M551.2 947.6 L549.6 949.2"/><path d="M555.1 949.2 L555.1 951.5"/></g><circle cx="555.1" cy="943.7" r="4.3" fill="#f5a31f"/><circle cx="562.6" cy="947.8" r="4.6" fill="#5bbccb"/><path d="M560.4 952.8 H564.8000000000001 L562.6 955.8 Z" fill="#666"/><ellipse cx="583.5" cy="952.3" rx="5.5" ry="1.6" fill="#9a9a9a"/><circle cx="584.4" cy="943.2" r="5.8" fill="#e6e6e6" stroke="#7a7a7a" stroke-width="1.1"/><circle cx="593" cy="947.2" r="4.6" fill="#f2c14e"/><path d="M590.8 952.2 H595.2 L593 955.2 Z" fill="#666"/><path d="M608 940 L611 947 H619 L623 941 M612 940 C613 937.5 616 937.5 617 940 Z M620 941 C623 938.5 625 939 625.5 941" fill="none" stroke="#555" stroke-width="1.2"/><circle cx="622.8" cy="947.2" r="4.6" fill="#5bbccb"/><path d="M620.5999999999999 952.2 H625.0 L622.8 955.2 Z" fill="#666"/><path d="M645 936.5 V940" stroke="#3d7fc4" stroke-width="1.5"/><path d="M642 941.5 H655 M642 941.5 V954" fill="none" stroke="#555" stroke-width="2"/><path d="M637.5 949.5 H640 M646 949.5 H648" stroke="#3d7fc4" stroke-width="1.5"/><path d="M649.5 947.5 L655.5 953.5 M655.5 947.5 L649.5 953.5" stroke="#e02828" stroke-width="1.8"/><path d="M677 936.5 V940" stroke="#3d7fc4" stroke-width="1.5"/><path d="M672.5 941.5 H683 M672.5 941.5 V954" fill="none" stroke="#555" stroke-width="2"/><path d="M667.5 949.5 H670" stroke="#3d7fc4" stroke-width="1.5"/><circle cx="682.4" cy="947.2" r="4.6" fill="#5bbccb"/><path d="M680.1999999999999 952.2 H684.6 L682.4 955.2 Z" fill="#666"/><path d="M699 946 L707 938 L715 946 M700.5 944.5 V954 H705 V949 H708" fill="none" stroke="#6a6a6a" stroke-width="1.6"/><rect x="707" y="949" width="8" height="5.5" fill="#5bbccb"/><path d="M709 949 V946.5 C709 944 714 944 714 946.5" fill="none" stroke="#5bbccb" stroke-width="1.2"/><rect x="727.5" y="936.5" width="19" height="19" fill="#e4eef8" stroke="#3a7fc0" stroke-width="1.3"/><circle cx="732.5" cy="948" r="3.3" fill="none" stroke="#666" stroke-width="1.5"/><circle cx="741.5" cy="948" r="3.3" fill="none" stroke="#666" stroke-width="1.5"/><path d="M735.8 947 H738.2 M729.5 947 L731.5 940.5 M744.5 947 L742.5 940.5" fill="none" stroke="#666" stroke-width="1.3"/><circle cx="766.7" cy="943" r="5" fill="#5bbccb"/><path d="M764.2 948.5 H769.2 L768.5 952 C767.5 953 765.9 953 764.9 952 Z" fill="#666"/><path d="M789 951 V938.5 H799.5 L802 941" fill="none" stroke="#666" stroke-width="1.3"/><path d="M792 948 V941.5 H800" fill="none" stroke="#888" stroke-width="1.1"/><rect x="797" y="945.5" width="8" height="8" fill="none" stroke="#666" stroke-width="1.4" stroke-dasharray="2 2"/><path d="M818 941 L822 937 H834 V950 L830 954 H818 Z M818 941 H830 V954 M830 941 L834 937 M822 937 V946" fill="none" stroke="#555" stroke-width="1.2"/><path d="M818 946 H828 M818 950 H828 M822 946 V954 M826 941 V954" stroke="#d83030" stroke-width="1.2"/><circle cx="832.5" cy="947.5" r="4.6" fill="#5bbccb"/><path d="M830.3 952.5 H834.7 L832.5 955.5 Z" fill="#666"/><path d="M852 943 L856.5 939 H865 V949 L861 953 H852 Z" fill="#f2f2f2" stroke="#666" stroke-width="1.2"/><path d="M852 943 L856.5 939 H865 L861 943 Z" fill="#4d94d6"/><path d="M861 943 L865 939 V949 L861 953 Z" fill="#7fb5e6"/><rect x="854.5" y="945" width="5" height="5.5" fill="none" stroke="#555" stroke-width="1.2"/><path d="M849.5 945 V952" stroke="#7fb5e6" stroke-width="1.2"/><path d="M877.5 937 V950 M877.5 941.5 H891 M891 937 V942 M880 948.5 H885" fill="none" stroke="#444" stroke-width="1.3"/><path d="M879.5 940 L877.8 941.5 L879.5 943 M889 940 L890.7 941.5 L889 943" fill="none" stroke="#444" stroke-width="1"/><circle cx="892.3" cy="947.5" r="4.6" fill="#5bbccb"/><path d="M890.0999999999999 952.5 H894.5 L892.3 955.5 Z" fill="#666"/></svg><svg style="left:0;top:0" width="1918" height="300" viewBox="0 0 1918 300"><rect x="1655.6" y="245" width="44.7" height="23.3" rx="11.6" fill="#9a9a9a"/><circle cx="1667.7" cy="257" r="7.6" fill="#fff"/></svg><div class="t" style="left:1705.0px;top:240.2px;font-size:14px;line-height:14px;color:#555555;letter-spacing:0.42px;">Accelerated Graphics</div>
<div class="t" style="left:1705.0px;top:256.2px;font-size:14px;line-height:14px;color:#555555;letter-spacing:0.27px;font-style:italic;">Tech Preview</div>
<svg style="left:0;top:0" width="1918" height="987" viewBox="0 0 1918 987"><defs><radialGradient id="vcs" cx="0.5" cy="0.5" r="0.5"><stop offset="0" stop-color="#bdbdbd"/><stop offset="0.6" stop-color="#dedede" stop-opacity="0.7"/><stop offset="1" stop-color="#ffffff" stop-opacity="0"/></radialGradient><linearGradient id="vcl" x1="0" y1="0" x2="0.3" y2="1"><stop offset="0" stop-color="#f2f2f2"/><stop offset="1" stop-color="#dcdcdc"/></linearGradient><linearGradient id="vcr" x1="0" y1="0" x2="0" y2="1"><stop offset="0" stop-color="#ebebeb"/><stop offset="1" stop-color="#d8d8d8"/></linearGradient></defs><ellipse cx="1808" cy="338" rx="66" ry="26.5" fill="#f5f5f5" stroke="#c2c2c2" stroke-width="0.9" stroke-dasharray="1.6 1.2"/><ellipse cx="1808" cy="337.5" rx="50.5" ry="16.8" fill="#ffffff" stroke="#c8c8c8" stroke-width="0.9" stroke-dasharray="1.6 1.2"/><ellipse cx="1815" cy="338" rx="32" ry="10" fill="url(#vcs)"/><path d="M1774.4 285.7 L1798.8 274.4 L1839.8 280.4 L1818 293.7 Z" fill="#eeeeee" stroke="#8e8e8e" stroke-width="0.9"/><path d="M1774.4 285.7 L1818 293.7 L1818 341 L1774.9 331.5 Z" fill="url(#vcl)" stroke="#8e8e8e" stroke-width="0.9"/><path d="M1818 293.7 L1839.8 280.4 L1838.7 323.5 L1818 341 Z" fill="url(#vcr)" stroke="#8e8e8e" stroke-width="0.9"/><text x="0" y="0" font-family="Liberation Sans" font-weight="bold" font-size="11" fill="#8a8a8a" transform="translate(1786 316.5) skewY(8) scale(0.85 1.2)">LEFT</text><text x="0" y="0" font-family="Liberation Sans" font-weight="bold" font-size="9" fill="#8e8e8e" transform="translate(1822 322) skewY(-40) scale(0.62 1.3)">FRONT</text><text x="0" y="0" font-family="Liberation Sans" font-size="6" fill="#a0a0a0" transform="translate(1803 284) rotate(-10) scale(0.8 1)">TOP</text><g fill="none" stroke="#c4c4c4" stroke-width="0.9" stroke-dasharray="1.2 0.9"><path d="M1750 321 L1756 317 L1766 320 L1760 323 Z"/><path d="M1772 352 L1781 356 L1768 358 Z M1760 361 L1772 357 L1782 362 Z"/><path d="M1855 346 C1858 343 1866 344 1869 348 C1866 351 1858 350 1855 346 Z"/></g></svg><div class="r" style="left:0px;top:957px;width:1918px;height:30px;background:#f3f3f3;"></div>
<div class="t" style="left:3.0px;top:968.0px;font-size:15px;line-height:15px;color:#444444;letter-spacing:-0.36px;">Generic Models : AutoBRIDGE_Corridor_ID91690 : AutoBRIDGE_Corridor_ID91690</div>
<div class="t" style="left:1100.0px;top:968.3px;font-size:15px;line-height:15px;color:#9a9a9a;letter-spacing:0.56px;">Main Model</div>
<div class="t" style="left:996.0px;top:968.3px;font-size:15px;line-height:15px;color:#888888;">:0</div>
<div class="t" style="left:1830.0px;top:968.3px;font-size:15px;line-height:15px;color:#333333;">:0</div>
<svg style="left:0;top:0" width="1918" height="987" viewBox="0 0 1918 987"><path d="M688 967.5 Q691.5 964.5 695 967.5 V976.5 Q691.5 979.5 688 976.5 Z" fill="#5a9ad8"/><path d="M697 965.5 Q700.4 962.5 703.8 965.5 V973.5 Q700.4 976.5 697 973.5 Z" fill="#d98a50"/><path d="M693 972.5 Q697 969.5 701 972.5 V982 Q697 985 693 982 Z" fill="#4cb06a" stroke="#eaf7ff" stroke-width="1"/><path d="M700 982 L705 977" stroke="#3a7ab8" stroke-width="2.2" stroke-linecap="round"/><path d="M703.5 975.5 C703 973.5 705 972 706.5 973 L705.2 975 L707 976.3 L708.3 974.5 C709 976.5 707.5 978.5 705.5 978 Z" fill="#3a7ab8"/><path d="M958.5 972 L962.5 976 L966.5 972" fill="none" stroke="#aaa" stroke-width="1.3"/><path d="M1338.5 972 L1342.5 976 L1346.5 972" fill="none" stroke="#aaa" stroke-width="1.3"/><circle cx="985" cy="975" r="2.6" fill="none" stroke="#999" stroke-width="1.2"/><path d="M980.5 983.5 C980.5 979.5 989.5 979.5 989.5 983.5 Z" fill="none" stroke="#999" stroke-width="1.2"/><path d="M987.5 965 H994 V970 H991 L989.5 972 V970 H987.5 Z" fill="none" stroke="#999" stroke-width="1.1"/><rect x="1039.5" y="964.5" width="19" height="18" fill="#fff" stroke="#333" stroke-width="1.4"/><rect x="1039.5" y="964.5" width="19" height="3" fill="#333"/><path d="M1042 970.5H1044 M1046 970.5H1056 M1042 974H1044 M1046 974H1056 M1042 977.5H1044 M1046 977.5H1056" stroke="#333" stroke-width="1.3"/><rect x="1070.5" y="964.5" width="17" height="15" fill="#fff" stroke="#999" stroke-width="1.3"/><path d="M1073 968.5H1075 M1077 968.5H1085 M1073 972H1075 M1077 972H1085 M1073 975.5H1075 M1077 975.5H1085 M1070 983 H1078" stroke="#999" stroke-width="1.2"/><path d="M1634 968 C1634 965 1640 965 1641 968 C1642 971 1648 971 1648 968 C1648 965 1642 965 1641 968 C1640 971 1634 971 1634 968 Z" fill="none" stroke="#e7a878" stroke-width="1.6"/><path d="M1642 972 L1642 982 L1644.5 979.5 L1646.5 983 L1648 982 L1646 979 L1649.5 979 Z" fill="#fff" stroke="#333" stroke-width="1"/><path d="M1663 972 L1669 966 H1676 L1672 972 Z M1662 978 L1665 975 H1674 L1671 978 Z" fill="#5aa3e6"/><path d="M1674 965 L1680 971 M1680 965 L1674 971" stroke="#e02828" stroke-width="1.8"/><path d="M1672 973 L1672 983 L1674.5 980.5 L1676.5 984 L1678 983 L1676 980 L1679.5 980 Z" fill="#fff" stroke="#333" stroke-width="1"/><path d="M1694 964.5 H1702 V967 L1700 969 V973 H1703 V975 H1697.5 V982 M1694 964.5 V967 L1696 969 V973 H1693 V975 H1697.5" fill="none" stroke="#777" stroke-width="1.1"/><path d="M1702 972 L1702 982 L1704.5 979.5 L1706.5 983 L1708 982 L1706 979 L1709.5 979 Z" fill="#fff" stroke="#333" stroke-width="1"/><path d="M1722 968 L1727 965 L1732 966 V981 L1722 984 Z" fill="#5aa3e6"/><path d="M1733 964.5 L1739 970.5 M1739 964.5 L1733 970.5" stroke="#e02828" stroke-width="1.8"/><path d="M1731 972 L1731 982 L1733.5 979.5 L1735.5 983 L1737 982 L1735 979 L1738.5 979 Z" fill="#fff" stroke="#333" stroke-width="1"/><path d="M1759.5 964 V981 M1752 971.5 H1767" stroke="#222" stroke-width="1.3"/><path d="M1757.5 966 L1759.5 963.5 L1761.5 966 Z M1757.5 979 L1759.5 981.5 L1761.5 979 Z M1754 969.5 L1751.5 971.5 L1754 973.5 Z" fill="#222"/><path d="M1763 972 L1763 982 L1765.5 979.5 L1767.5 983 L1769 982 L1767 979 L1770.5 979 Z" fill="#fff" stroke="#333" stroke-width="1"/><circle cx="1797.5" cy="974.0" r="1.2" fill="#c8c8c8"/><circle cx="1795.6" cy="978.6" r="1.2" fill="#c8c8c8"/><circle cx="1791.0" cy="980.5" r="1.2" fill="#c8c8c8"/><circle cx="1786.4" cy="978.6" r="1.2" fill="#c8c8c8"/><circle cx="1784.5" cy="974.0" r="1.2" fill="#c8c8c8"/><circle cx="1786.4" cy="969.4" r="1.2" fill="#c8c8c8"/><circle cx="1791.0" cy="967.5" r="1.2" fill="#c8c8c8"/><circle cx="1795.6" cy="969.4" r="1.2" fill="#c8c8c8"/><path d="M1810.5 965.5 H1830 L1822.5 974 V984 L1818 982.5 V974 Z" fill="#e0e0e0" stroke="#555" stroke-width="1.2" stroke-linejoin="round"/><path d="M1812 966.5 H1828.5 L1822 973.5 H1818 Z" fill="#bbb"/></svg></body></html>
